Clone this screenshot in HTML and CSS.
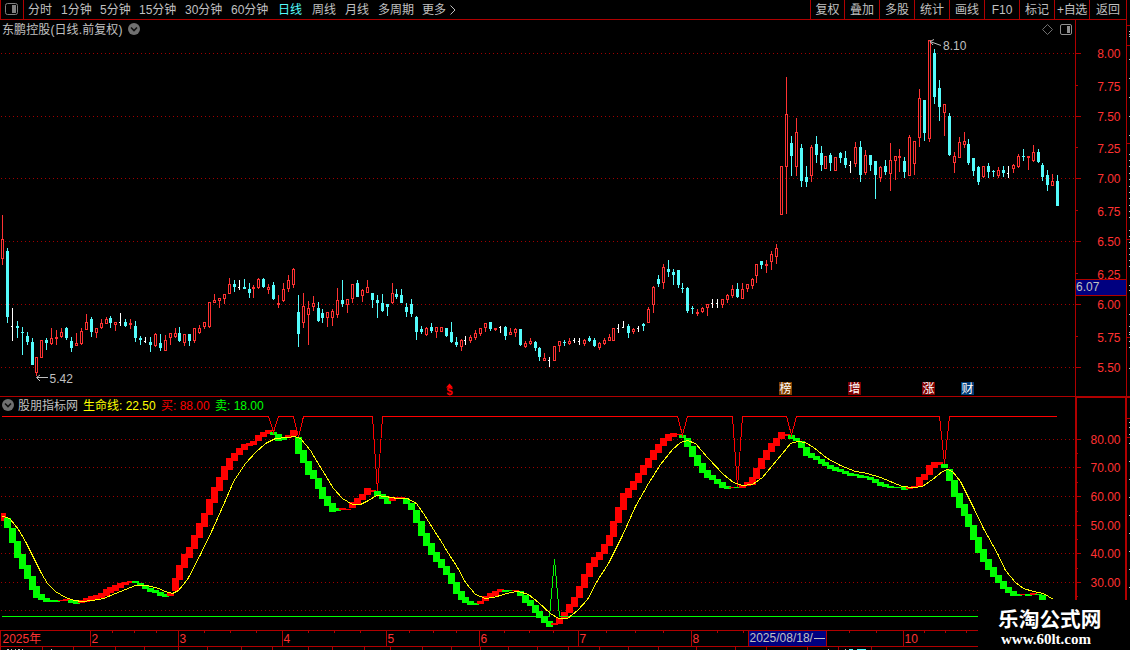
FILE: index.html
```html
<!DOCTYPE html>
<html lang="zh-CN">
<head>
<meta charset="utf-8">
<title>东鹏控股 日线</title>
<link rel="stylesheet" href="styles.css">
</head>
<body>
<div class="app">
  <header class="topbar">
    <div class="panel-toggle">
      <svg width="13" height="12" viewBox="0 0 13 12"><rect x="0.5" y="0.5" width="12" height="11" rx="2" class="icon-frame"/><rect x="7" y="2" width="4" height="8" class="icon-fill"/></svg>
    </div>
    <nav class="periods">
      <span>分时</span><span>1分钟</span><span>5分钟</span><span>15分钟</span><span>30分钟</span><span>60分钟</span><span class="active">日线</span><span>周线</span><span>月线</span><span>多周期</span><span>更多<svg class="more" width="6" height="10" viewBox="0 0 6 10"><path d="M0.5 0.5L5 5L0.5 9.5"/></svg></span>
    </nav>
    <nav class="tools">
      <span>复权</span><span>叠加</span><span>多股</span><span>统计</span><span>画线</span><span>F10</span><span>标记</span><span>+自选</span><span>返回</span>
    </nav>
  </header>

  <section class="panel price">
    <svg id="price" width="1130" height="376" viewBox="0 20 1130 376"></svg>
    <div class="title"><span class="stock">东鹏控股(日线.前复权)</span>
      <svg width="12" height="12" viewBox="0 0 12 12"><circle cx="6" cy="6" r="6" class="disc"/><path d="M3 4.5L6 7.5L9 4.5" class="chev"/></svg>
    </div>
    <div class="corner">
      <svg width="11" height="11" viewBox="0 0 11 11"><path d="M5.5 0.5L10.5 5.5L5.5 10.5L0.5 5.5Z" class="diamond"/></svg>
      <svg width="12" height="11" viewBox="0 0 12 11"><rect x="0.5" y="0.5" width="11" height="10" rx="1.5" class="corner-frame"/><rect x="7" y="2" width="3" height="7" class="corner-fill"/></svg>
    </div>
  </section>

  <section class="panel indicator">
    <svg id="indicator" width="1130" height="234" viewBox="0 396 1130 234"></svg>
    <div class="legend">
      <svg width="12" height="12" viewBox="0 0 12 12"><circle cx="6" cy="6" r="6" class="disc"/><path d="M3 4.5L6 7.5L9 4.5" class="chev"/></svg>
      <span class="lg-name">股朋指标网</span><span class="lg-life">生命线: 22.50</span><span class="lg-buy">买: 88.00</span><span class="lg-sell">卖: 18.00</span>
    </div>
  </section>

  <footer class="dates">
    <svg id="dates" width="1130" height="20" viewBox="0 630 1130 20"></svg>
  </footer>

  <div class="brand"><div class="brand-cn">乐淘公式网</div><div class="brand-url">www.60lt.com</div></div>
</div>
<script src="chart.js"></script>
</body>
</html>
```
FILE: styles.css
```css
* { box-sizing: border-box; }
body { margin: 0; background: #000; }
.app {
  position: relative;
  width: 1130px;
  height: 650px;
  overflow: hidden;
  display: grid;
  grid-template-rows: 20px 376px 234px 20px;
  background: #000;
  color: #c0c0c0;
  font: 12px/16px "Liberation Sans", "Noto Sans CJK SC", sans-serif;
}
svg { display: block; }
svg text { font-family: "Liberation Sans", "Noto Sans CJK SC", sans-serif; font-size: 12px; }
.topbar {
  display: flex;
  width: 1127px;
  height: 20px;
  border-bottom: 1px solid #b00000;
  border-right: 1px solid #b00000;
}
.panel-toggle {
  width: 24px;
  padding: 3px 0 0 4px;
  border-left: 1px solid #b00000;
  border-right: 1px solid #b00000;
}
.icon-frame { fill: none; stroke: #808080; }
.icon-fill { fill: #808080; }
.periods {
  display: grid;
  grid-template-columns: 33px 39px 39px 46px 46px 47px 34px 33px 33px 44px 60px;
  padding: 2px 0 0 4px;
  flex: 1;
  white-space: nowrap;
}
.periods .active { color: #54fcfc; }
.more { display: inline-block; margin-left: 4px; vertical-align: -1px; }
.more path { fill: none; stroke: #c0c0c0; }
.tools {
  display: grid;
  grid-template-columns: 34px 35px 35px 35px 35px 35px 35px 35px 37px;
  text-align: center;
  white-space: nowrap;
}
.tools span { border-left: 1px solid #b00000; padding-top: 2px; }
.tools span:nth-child(8) { letter-spacing: -0.3px; }
.panel { position: relative; }
.title {
  position: absolute;
  left: 2px;
  top: 2px;
  display: flex;
  align-items: center;
  gap: 5px;
}
.stock { width: 121px; white-space: nowrap; letter-spacing: 0.1px; }
.title svg { margin-top: -2px; }
.disc { fill: #707070; }
.chev { fill: none; stroke: #101010; stroke-width: 1.6; }
.corner {
  position: absolute;
  left: 1042px;
  top: 4px;
  display: flex;
  gap: 7px;
}
.diamond { fill: none; stroke: #707070; }
.corner-frame { fill: none; stroke: #909090; }
.corner-fill { fill: #909090; }
.legend {
  position: absolute;
  left: 2px;
  top: 2px;
  display: flex;
  align-items: center;
  white-space: nowrap;
}
.legend svg { margin-top: -2px; }
.lg-name { margin-left: 4px; width: 65px; }
.lg-life { color: #ffff00; width: 78px; }
.lg-buy { color: #ff0000; width: 54px; }
.lg-sell { color: #00ff00; }
.brand {
  position: absolute;
  left: 978px;
  top: 600px;
  width: 152px;
  height: 50px;
  padding: 3px 0 0 20px;
  background: #000;
  color: #fff;
  white-space: nowrap;
}
.brand-cn { font: 700 20.7px/30px "Noto Sans CJK SC", sans-serif; }
.brand-url { margin: -2px 0 0 3px; font: 700 15px/17px "Liberation Serif", serif; }

.crisp { shape-rendering: crispEdges; }
.grid { stroke: #a00000; stroke-dasharray: 1 3; }
.frame { fill: #b00000; }
.up { fill: #ff3232; }
.up-box { fill: #000; stroke: #ff3232; }
.down { fill: #54fcfc; }
.flat { fill: #fff; }
.scale { fill: #ff3232; }
.note { fill: #c0c0c0; }
.note-line { fill: none; stroke: #c0c0c0; }
.cursor { fill: #000080; }
.event { fill: #fff; }
.bar-r { fill: #ff0000; }
.bar-g { fill: #00ff00; }
.line { fill: none; }
.buy { stroke: #ff0000; }
.sell { stroke: #00ff00; }
.life { stroke: #ffff00; }
svg .dividend { font-size: 11px; font-weight: 700; }
```
FILE: chart.js
```js
// Candles: x, kind (r up, c down, w flat), high, body top, body bottom, low
const candles = `2r215 239 259 265|7c248 251 317 323|12w308 326 326 341|17c321 326 328 338|22c327 332 333 355|27c332 336 342 345|32c338 342 365 365|36r357 357 373 376|41r340 340 358 358|46c338 340 343 350|51r328 338 344 345|56r330 337 339 345|61r328 332 337 338|66c327 328 338 340|71c337 341 348 352|76r333 343 346 346|81r328 331 344 345|86r314 322 330 330|91c317 319 332 337|96r328 328 333 338|101r319 323 328 329|106r317 319 324 324|110c316 318 323 328|115r322 322 325 331|120w313 322 322 326|125c319 322 326 327|130r319 323 325 329|135c321 326 338 342|140c336 338 340 345|145w337 341 341 343|150c337 342 345 352|155r333 334 346 347|160c334 343 348 351|165r335 340 351 351|170r333 333 338 345|175r328 333 337 338|179c327 333 341 342|184r334 334 343 346|189c334 334 341 346|194r328 328 341 343|199r325 328 333 334|204r322 322 327 329|209r302 302 327 328|214r294 300 303 303|219r298 298 301 308|224r294 294 299 304|229r278 284 294 294|234c280 284 287 292|239w280 287 287 290|244c279 287 289 289|249c283 289 293 298|253r285 287 289 298|258r278 279 288 289|263c278 279 287 288|268r284 287 290 294|273c282 285 299 300|278r295 303 305 308|283r283 289 301 302|288r275 280 289 292|293r268 269 285 288|298c295 312 334 347|303r293 306 323 328|308r301 308 315 345|313r296 303 307 311|318c302 308 321 322|322c309 313 318 323|327r312 312 318 327|332r309 311 318 326|337r288 300 315 318|342c280 300 304 307|347r299 299 305 313|352r284 284 299 303|357c280 283 297 297|362r289 290 296 302|367r280 287 293 293|372c293 293 300 308|377c295 300 303 318|382c294 303 311 312|387c304 304 307 316|392r283 293 303 304|396c289 294 297 299|401c289 295 303 303|406c303 307 312 317|411c299 304 314 317|416c316 317 332 340|421c326 329 332 334|426r327 328 335 336|431c323 327 331 333|436r327 327 332 338|441r327 327 332 332|446c328 328 336 337|451c322 332 342 343|456c337 342 345 347|461r339 340 347 351|465w336 340 340 345|470r335 337 341 343|475r330 333 338 340|480r328 328 334 336|485r323 323 328 332|490c322 322 329 331|495r328 328 330 331|500w326 327 327 333|505c326 327 336 340|510r328 332 335 335|515r328 329 333 337|520c329 329 345 346|525r341 343 347 348|530r338 341 344 345|535c341 342 348 351|539c347 348 357 361|544r353 358 361 361|549w357 360 360 367|554r346 346 361 361|559r341 341 346 352|564c340 342 343 346|569r338 341 344 345|574w338 340 340 343|579w338 341 341 345|584r339 340 344 346|589c336 338 341 342|594c338 340 346 347|599r342 343 348 350|604r338 340 344 345|609r334 337 341 341|613r328 328 341 341|618w324 328 328 333|623w321 327 327 328|628c324 326 333 338|633r328 329 332 334|638w326 328 328 332|643c323 324 326 331|648r307 309 323 323|653r286 287 305 313|658c275 279 284 287|663r264 267 283 289|668c260 269 272 277|673c269 272 275 285|678c270 270 285 288|682c283 288 289 293|687c287 288 311 313|692c306 308 309 314|697r309 312 314 316|702r307 308 312 313|707r304 304 308 316|712w299 303 303 308|717w299 303 303 308|722r299 299 305 308|727r294 295 300 303|732r285 289 296 298|737c283 289 297 298|742r283 289 299 299|747r284 284 289 292|752r278 279 286 289|756r264 264 276 283|761c261 261 265 269|766r260 264 266 273|771r251 254 262 270|776r244 248 257 264|781r166 166 215 215|786r77 114 167 214|791c136 143 156 176|796r118 132 167 176|801c144 148 181 187|806c166 177 182 187|811r145 147 176 182|816c136 144 155 163|821c146 153 165 171|825r156 156 169 169|830c153 155 163 171|835r157 157 171 171|840c152 153 158 163|845c151 158 165 168|850w161 165 165 173|855r142 147 164 167|860c141 147 175 182|865r150 155 173 175|870c155 155 165 171|875c161 161 175 199|880r166 167 178 182|885c160 166 172 175|890r143 160 174 191|895r156 156 161 180|899r149 156 158 172|904c157 161 172 178|909r135 137 176 176|914r141 141 164 175|919r89 98 138 147|924c100 100 133 141|929r40 40 139 142|934c49 53 97 104|939c80 88 107 121|944r104 104 113 136|949c113 116 155 156|954r152 156 163 173|959r137 142 158 158|964r132 141 145 148|968c139 144 163 165|973c158 158 171 176|978c166 167 182 185|983r166 166 177 178|988c163 166 172 178|993c170 171 172 177|998r167 170 176 178|1003c166 170 173 177|1008w166 173 173 178|1013r164 165 169 173|1018r154 156 167 168|1023c149 156 157 161|1028r156 156 158 170|1033r145 152 161 162|1038c149 152 162 163|1042c163 165 177 181|1047c170 175 185 191|1052r174 181 186 186|1057c175 181 206 206`;

// Trend bars: x, colour, top, bottom
const bars = `2r513 521|7g518 528|12g528 543|17g541 558|22g554 569|27g565 579|32g576 590|36g586 598|41g594 600|46g598 602|51g600 602|56g600 602|61r600 601|66r599 601|71g600 603|76g601 604|81r600 603|86r598 602|91r596 600|96r595 599|101r593 598|106r589 596|110r587 593|115r585 591|120r583 588|125r582 585|130r581 583|135g581 583|140g583 586|145g585 589|150g588 592|155g590 593|160g592 596|165g594 597|170r593 596|175r578 591|179r565 580|184r554 568|189r547 558|194r535 549|199r523 538|204r513 527|209r499 515|214r487 503|219r477 491|224r466 480|229r458 470|234r453 461|239r448 455|244r444 450|249r443 446|253r441 445|258r435 441|263r432 437|268r430 434|273g432 435|278g434 441|283g437 440|288r435 438|293r430 436|298g437 454|303g450 463|308g461 475|313g470 479|318g478 489|322g487 499|327g496 506|332g503 512|337g508 511|342r508 510|347r509 510|352r502 508|357r498 504|362r494 500|367r488 495|372r490 492|377g491 496|382g494 499|387g497 504|392r498 501|396r497 499|401r497 498|406g499 504|411g503 510|416g510 523|421g521 536|426g533 546|431g543 555|436g552 562|441g559 568|446g566 575|451g573 584|456g582 594|461g591 600|465g597 603|470g601 605|475g603 605|480r601 604|485r596 601|490r593 597|495r591 596|500r589 592|505g590 592|510g590 591|515r590 591|520g591 596|525g595 603|530g600 606|535g605 613|539g611 618|544g616 623|549g621 627|554r623 625|559r618 624|564r612 619|569r604 613|574r597 607|579r586 598|584r574 588|589r563 577|594r557 567|599r552 560|604r544 554|609r535 546|613r521 537|618r507 523|623r493 510|628r488 498|633r481 490|638r473 483|643r465 475|648r458 468|653r450 460|658r444 453|663r438 446|668r434 441|673r433 437|678r434 435|682g435 438|687g438 447|692g446 457|697g455 466|702g463 473|707g470 478|712g475 480|717g479 484|722g482 488|727g486 489|732r487 488|737g487 488|742r485 488|747r482 486|752r477 485|756r468 479|761r458 469|766r450 460|771r443 452|776r438 446|781r432 439|786r434 436|791g435 439|796g438 441|801g441 448|806g447 456|811g453 458|816g456 460|821g459 464|825g462 466|830g465 469|835g467 471|840g469 472|845g471 474|850g473 476|855g474 476|860g475 478|865g476 478|870g477 480|875g479 483|880g482 486|885g484 487|890g486 488|895g487 488|899g487 488|904g487 490|909r487 489|914r486 488|919r477 486|924r474 480|929r465 475|934r462 468|939r462 465|944g464 468|949g469 481|954g480 497|959g493 508|964g504 516|968g514 527|973g525 540|978g537 553|983g549 562|988g559 570|993g567 577|998g575 583|1003g581 589|1008g587 593|1013g591 596|1018g594 596|1023r594 595|1028g594 596|1033r593 595|1038g594 595|1042g595 600`;

const life = "2,516 7,517 10,519 18,529 25,541 32,555 41,573 47,583 55,591 65,597 74,600 82,601 92,600 103,598 115,593 125,589 135,585 147,585 158,588 165,591 172,593 178,590 187,579 200,554 213,527 225,500 233,481 245,463 255,452 265,443 275,438 287,437 294,436 300,438 310,450 322,470 333,488 342,498 352,504 360,504 368,500 376,495 385,496 397,498 407,498 416,503 423,513 433,529 442,543 448,553 457,567 465,582 475,594 485,598 493,597 503,594 510,592 518,591 528,594 538,602 550,613 558,618 567,618 577,610 587,599 597,580 608,563 622,535 635,506 648,483 660,464 672,449 680,442 687,440 695,443 707,457 723,474 733,482 742,485 752,484 762,477 772,465 782,453 790,443 797,441 805,442 813,447 827,458 840,465 855,471 867,473 880,477 902,486 913,487 922,486 932,479 942,471 947,469 952,471 960,481 973,507 983,528 997,553 1005,570 1015,582 1023,588 1033,591 1043,593 1053,599";

const rect = (x, y, w, h, c) => `<rect x="${x}" y="${y}" width="${w}" height="${h}" class="${c}"/>`;
const text = (x, y, s, c, extra = "") => `<text x="${x}" y="${y}" class="${c}" ${extra}>${s}</text>`;
const parse = (s) => s.split("|").map((row) => {
  const m = row.match(/^(\d+)([a-z])(.*)$/);
  return [Number(m[1]), m[2], ...m[3].split(" ").map(Number)];
});
const gridLine = (y) => `<path d="M1 ${y + 0.5}H1075" class="grid"/>`;

// Strip at the far right edge: section rules and clipped digits
const edgeRules = [25, 45, 143, 239, 337, 397, 418, 437];
const edgeDots = [31, 34, 36, 59, 78, 97, 116, 135, 154, 160, 166, 173, 179, 186, 192, 198, 205, 211, 217, 230, 236, 242, 248, 254, 260, 266, 285, 290, 314, 326, 332, 334, 341, 347, 368, 422, 427, 434, 443, 461, 479, 497, 515, 533, 551, 569, 587];
const edge = (y0, y1) => {
  const inside = (y) => y >= y0 && y < y1;
  return edgeRules.filter(inside).map((y) => rect(1127, y, 3, 1, "frame")).join("") +
    edgeDots.filter(inside).map((y) => rect(1129, y, 1, 1, "note")).join("");
};

function drawPrice() {
  let s = '<g class="crisp">';
  s += [53, 116, 178, 241, 304, 367].map(gridLine).join("");
  s += rect(1075, 20, 1, 376, "frame") + rect(1126, 20, 1, 376, "frame");
  [53, 116, 178, 241, 304, 367].forEach((y) => { s += rect(1076, y, 5, 1, "frame"); });
  [85, 147, 210, 273, 336].forEach((y) => { s += rect(1076, y, 2, 1, "frame"); });
  for (const [x, k, hi, top, bot, lo] of parse(candles)) {
    const c = k === "r" ? "up" : k === "c" ? "down" : "flat";
    s += rect(x, hi, 1, Math.max(1, lo - hi), c);
    if (k === "w") s += rect(x - 1, top, 1, 1, c);
    else if (k === "c" || bot - top < 3) s += rect(x - 1, top, 3, bot - top, c);
    else s += rect(x - 0.5, top + 0.5, 2, bot - top - 1, "up-box");
  }
  s += edge(20, 396) + "</g>";
  const labels = [[8, 53], [7.75, 86], [7.5, 116], [7.25, 148], [7, 178], [6.75, 211], [6.5, 241], [6.25, 274], [6, 304], [5.75, 337], [5.5, 367]];
  labels.forEach(([v, y]) => { s += text(1120.5, y + 5, v.toFixed(2), "scale", 'text-anchor="end"'); });
  s += '<g class="crisp">' + rect(1076, 280, 50, 15, "cursor") + rect(1076, 279, 50, 1, "frame") + rect(1076, 295, 50, 1, "frame") + "</g>";
  s += text(1076, 291, "6.07", "note");
  s += text(943, 50, "8.10", "note") + '<path d="M930 41.5L941 45.5M934 39.5L930 41.5L933 45" class="note-line"/>';
  s += text(49.5, 383, "5.42", "note") + '<path d="M37 377.5H48M40 375L36.5 377.5L40 381" class="note-line"/>';
  s += text(446.5, 395, "$", "bar-r dividend") + '<path d="M446 387.5L449.5 383.5L453 387.5Z" class="bar-r"/>';
  [[779, "榜", "#804000"], [848, "增", "#800000"], [922, "涨", "#800000"], [961, "财", "#003c78"]].forEach(([x, t, c]) => {
    s += `<rect x="${x}" y="382" width="13" height="13" fill="${c}"/>` + text(x + 0.5, 393, t, "event");
  });
  document.getElementById("price").innerHTML = s;
}

function drawIndicator() {
  let s = '<g class="crisp">';
  s += [439, 467, 496, 525, 553, 582, 610].map(gridLine).join("");
  s += rect(0, 396, 1130, 1, "frame") + rect(1075, 396, 51, 2, "frame") + rect(1075, 396, 2, 234, "frame") + rect(1125, 396, 2, 234, "frame");
  [439, 467, 496, 525, 553, 582].forEach((y) => { s += rect(1077, y, 4, 1, "frame"); });
  [453, 482, 511, 539, 568, 596].forEach((y) => { s += rect(1077, y, 1, 1, "frame"); });
  for (const [x, k, top, bot] of parse(bars)) {
    const x0 = Math.max(1, x - 3);
    s += rect(x0, top, x + 4 - x0, bot - top, "bar-" + k);
  }
  let buy = "M2 416.5";
  [[273, 432], [298, 437], [377, 491], [682, 435], [737, 487], [791, 435], [944, 464]].forEach(([x, y]) => {
    buy += `H${x - 4.5}L${x + 0.5} ${y}L${x + 5.5} 416.5`;
  });
  s += `<path d="${buy}H1057" class="line buy"/>`;
  s += '<path d="M2 616.5H549.5L554.5 559L559.5 616.5H978" class="line sell"/>';
  const points = life.split(" ").map((p) => { const [x, y] = p.split(",").map(Number); return `${x + 0.5},${y + 0.5}`; }).join(" ");
  s += `<polyline points="${points}" class="line life"/>`;
  s += edge(396, 600) + "</g>";
  [[80, 439], [70, 467], [60, 496], [50, 525], [40, 553], [30, 582]].forEach(([v, y]) => {
    s += text(1120.5, y + 5, v.toFixed(2), "scale", 'text-anchor="end"');
  });
  document.getElementById("indicator").innerHTML = s;
}

function drawDates() {
  let s = '<g class="crisp">' + rect(0, 630, 978, 1, "frame") + rect(0, 646, 978, 1, "frame") + rect(0, 630, 1, 17, "frame");
  const months = [[90, "2"], [178, "3"], [282, "4"], [386, "5"], [479, "6"], [578, "7"], [691, "8"], [903, "10"]];
  months.forEach(([x]) => { s += rect(x, 630, 1, 17, "frame"); });
  [112, 134, 156, 204, 230, 256, 308, 334, 360, 409, 433, 456, 504, 529, 553, 606, 635, 663, 717, 743, 849, 876, 924, 945, 966].forEach((x) => { s += rect(x, 631, 1, 2, "frame"); });
  [0, 42, 73, 115, 144, 178, 207, 241, 272, 308, 332, 364, 390, 422, 451, 480, 508, 537, 568, 599, 628, 658, 696, 735, 766, 807, 838, 871].forEach((x) => { s += rect(x, 647, 1, 3, "frame"); });
  s += rect(748, 631, 79, 15, "cursor") + rect(748, 630, 1, 17, "frame") + rect(826, 630, 1, 17, "frame");
  [[7, 2], [11, 1], [15, 1], [18, 2], [22, 1], [51, 1], [828, 1], [845, 1]].forEach(([x, w]) => { s += rect(x, 649, w, 1, "note"); });
  s += rect(849, 649, 4, 1, "down") + rect(857, 649, 9, 1, "down") + "</g>";
  s += text(2.5, 643, "2025年", "scale");
  months.forEach(([x, t]) => { s += text(x + 1.5, 643, t, "scale"); });
  s += text(749.5, 642, "2025/08/18/", "note") + '<path d="M814 638.5H825" class="note-line"/>';
  document.getElementById("dates").innerHTML = s;
}

drawPrice();
drawIndicator();
drawDates();
```
